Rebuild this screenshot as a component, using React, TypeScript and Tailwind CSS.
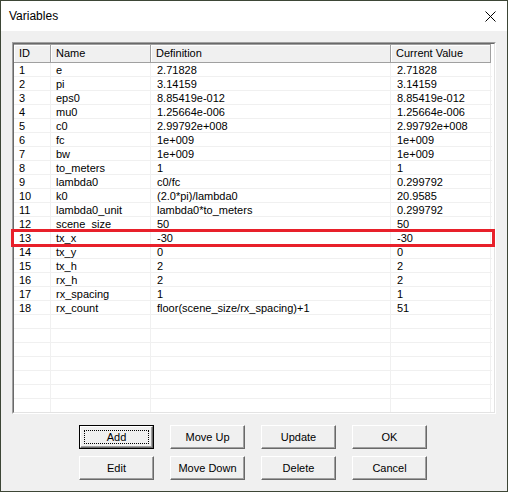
import React from 'react';

type Variable = { id: number; name: string; definition: string; value: string };

const variables: Variable[] = [
  { id: 1, name: 'e', definition: '2.71828', value: '2.71828' },
  { id: 2, name: 'pi', definition: '3.14159', value: '3.14159' },
  { id: 3, name: 'eps0', definition: '8.85419e-012', value: '8.85419e-012' },
  { id: 4, name: 'mu0', definition: '1.25664e-006', value: '1.25664e-006' },
  { id: 5, name: 'c0', definition: '2.99792e+008', value: '2.99792e+008' },
  { id: 6, name: 'fc', definition: '1e+009', value: '1e+009' },
  { id: 7, name: 'bw', definition: '1e+009', value: '1e+009' },
  { id: 8, name: 'to_meters', definition: '1', value: '1' },
  { id: 9, name: 'lambda0', definition: 'c0/fc', value: '0.299792' },
  { id: 10, name: 'k0', definition: '(2.0*pi)/lambda0', value: '20.9585' },
  { id: 11, name: 'lambda0_unit', definition: 'lambda0*to_meters', value: '0.299792' },
  { id: 12, name: 'scene_size', definition: '50', value: '50' },
  { id: 13, name: 'tx_x', definition: '-30', value: '-30' },
  { id: 14, name: 'tx_y', definition: '0', value: '0' },
  { id: 15, name: 'tx_h', definition: '2', value: '2' },
  { id: 16, name: 'rx_h', definition: '2', value: '2' },
  { id: 17, name: 'rx_spacing', definition: '1', value: '1' },
  { id: 18, name: 'rx_count', definition: 'floor(scene_size/rx_spacing)+1', value: '51' },
];

const TOTAL_ROWS = 25;

// classic raised Win32 push button
const Button = ({ label, isDefault = false }: { label: string; isDefault?: boolean }) => (
  <button
    className={`h-[24px] w-[75px] bg-[#f0f0f0] text-[11px] text-black flex items-center justify-center ${
      isDefault ? 'border border-black' : ''
    }`}
  >
    <span className="w-full h-full flex items-center justify-center border-t border-l border-white border-r border-b border-r-[#696969] border-b-[#696969] shadow-[inset_-1px_-1px_0_#a0a0a0]">
      {isDefault ? (
        <span className="w-[calc(100%-6px)] h-[calc(100%-6px)] border border-dotted border-black flex items-center justify-center">
          {label}
        </span>
      ) : (
        label
      )}
    </span>
  </button>
);

const HeaderCell = ({ label, width }: { label: string; width: string }) => (
  <div
    className={`${width} h-full shrink-0 flex items-center pl-[5px] border-r border-b border-[#a0a0a0] shadow-[inset_1px_1px_0_#ffffff]`}
  >
    {label}
  </div>
);

export default function App() {
  const rows = Array.from({ length: TOTAL_ROWS }, (_, i) => variables[i]);

  return (
    <div
      className="w-[508px] h-[492px] border border-[#3d4636] bg-[#f0f0f0] flex flex-col overflow-hidden text-black"
      style={{ fontFamily: '"Liberation Sans", Arial, sans-serif' }}
    >
      {/* Title bar */}
      <div className="h-[30px] bg-white flex items-center justify-between pl-[8px] pr-[10px] shrink-0">
        <span className="text-[12px]">Variables</span>
        <svg width="11" height="11" viewBox="0 0 11 11" className="mr-[1px]">
          <path d="M0.5 0.5 L10.5 10.5 M10.5 0.5 L0.5 10.5" stroke="#000" strokeWidth="1" />
        </svg>
      </div>

      {/* List view */}
      <div className="px-[11px] pt-[11px]">
        <div className="relative h-[372px] border border-t-[#a0a0a0] border-l-[#a0a0a0] border-r-white border-b-white">
          <div className="h-full border border-t-[#696969] border-l-[#696969] border-r-[#e3e3e3] border-b-[#e3e3e3] bg-white overflow-hidden text-[11px]">
            <div className="h-[19px] flex bg-[#f0f0f0] border-t border-[#a0a0a0] w-[477px]">
              <HeaderCell label="ID" width="w-[37px]" />
              <HeaderCell label="Name" width="w-[100px]" />
              <HeaderCell label="Definition" width="w-[240px]" />
              <HeaderCell label="Current Value" width="w-[100px]" />
            </div>
            {rows.map((v, i) => (
              <div key={i} className="h-[14px] flex w-[478px] border-b border-[#f0f0f0] leading-[14px]">
                <div className="w-[37px] shrink-0 pl-[5px] border-r border-[#f0f0f0]">{v?.id}</div>
                <div className="w-[100px] shrink-0 pl-[5px] border-r border-[#f0f0f0]">{v?.name}</div>
                <div className="w-[240px] shrink-0 pl-[6px] border-r border-[#f0f0f0] whitespace-nowrap overflow-hidden">
                  {v?.definition}
                </div>
                <div className="w-[100px] shrink-0 pl-[6px] border-r border-[#f0f0f0]">{v?.value}</div>
              </div>
            ))}
          </div>

          {/* highlight box around row 13 */}
          <div className="absolute left-[-2px] top-[186px] w-[484px] h-[18px] border-[3px] border-[#e8202a] pointer-events-none" />
        </div>
      </div>

      {/* Buttons */}
      <div className="pl-[78px] pt-[11px] grid grid-cols-[75px_75px_75px_75px] gap-x-[16px] gap-y-[7px] w-fit">
        <Button label="Add" isDefault />
        <Button label="Move Up" />
        <Button label="Update" />
        <Button label="OK" />
        <Button label="Edit" />
        <Button label="Move Down" />
        <Button label="Delete" />
        <Button label="Cancel" />
      </div>
    </div>
  );
}
